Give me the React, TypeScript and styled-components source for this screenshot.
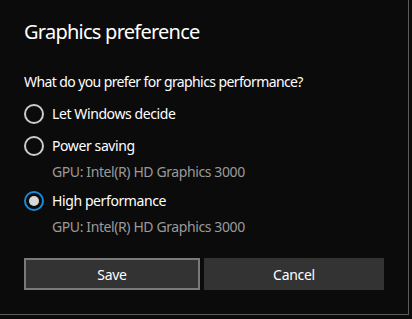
import styled, { createGlobalStyle } from "styled-components";

const Global = createGlobalStyle`
  html, body {
    margin: 0;
    background: #0b0b0b;
  }
  body {
    font-family: "Segoe UI", "Noto Sans", sans-serif;
    -webkit-font-smoothing: antialiased;
  }
`;

const options = [
  { label: "Let Windows decide", gpu: "" },
  { label: "Power saving", gpu: "GPU: Intel(R) HD Graphics 3000" },
  { label: "High performance", gpu: "GPU: Intel(R) HD Graphics 3000" },
];

export default function App() {
  const selected = 2;
  return (
    <>
      <Global />
      <Dialog>
        <Title>Graphics preference</Title>
        <Question>What do you prefer for graphics performance?</Question>
        <Options>
          {options.map((o, i) => (
            <Option key={o.label}>
              <Row>
                <Radio $checked={i === selected} />
                <Label>{o.label}</Label>
              </Row>
              {o.gpu && <Gpu>{o.gpu}</Gpu>}
            </Option>
          ))}
        </Options>
        <Buttons>
          <Button $focused>Save</Button>
          <Button>Cancel</Button>
        </Buttons>
      </Dialog>
    </>
  );
}

const Dialog = styled.div`
  box-sizing: border-box;
  width: 409px;
  height: 315px;
  background: #0b0b0b;
  border-right: 1px solid #5c5c5c;
  border-bottom: 1px solid #5c5c5c;
  padding: 18px 0 0 24px;
  display: flex;
  flex-direction: column;
  color: #fff;
`;

const Title = styled.h1`
  margin: 0;
  font-size: 20px;
  font-weight: 400;
  line-height: 28px;
  letter-spacing: -0.75px;
  color: #fff;
`;

const Question = styled.div`
  margin-top: 26px;
  font-size: 14px;
  line-height: 20px;
  letter-spacing: -0.6px;
`;

const Options = styled.div`
  margin-top: 6px;
  display: flex;
  flex-direction: column;
`;

const Option = styled.div`
  display: flex;
  flex-direction: column;
  &:nth-child(2) {
    margin-bottom: 3px;
  }
`;

const Row = styled.div`
  height: 32px;
  display: flex;
  align-items: center;
  gap: 8px;
`;

const Radio = styled.span<{ $checked?: boolean }>`
  box-sizing: border-box;
  width: 20px;
  height: 20px;
  border-radius: 50%;
  border: 2px solid ${(p) => (p.$checked ? "#1a8ad8" : "#cccccc")};
  position: relative;
  flex: none;
  &::after {
    content: "";
    display: ${(p) => (p.$checked ? "block" : "none")};
    position: absolute;
    left: 3px;
    top: 3px;
    width: 10px;
    height: 10px;
    border-radius: 50%;
    background: #d8d8d8;
  }
`;

const Label = styled.span`
  font-size: 14px;
  line-height: 20px;
  letter-spacing: -0.4px;
  color: #fff;
`;

const Gpu = styled.div`
  padding-left: 28px;
  font-size: 14px;
  line-height: 20px;
  letter-spacing: -0.4px;
  color: #9a9a9a;
`;

const Buttons = styled.div`
  margin-top: 21px;
  display: grid;
  grid-template-columns: 176px 180px;
  gap: 4px;
`;

const Button = styled.button<{ $focused?: boolean }>`
  box-sizing: border-box;
  height: 32px;
  background: #333333;
  border: 2px solid ${(p) => (p.$focused ? "#7a7a7a" : "#333333")};
  color: #fff;
  font-family: inherit;
  font-size: 14px;
  letter-spacing: -0.3px;
  padding: 0;
  cursor: pointer;
`;
